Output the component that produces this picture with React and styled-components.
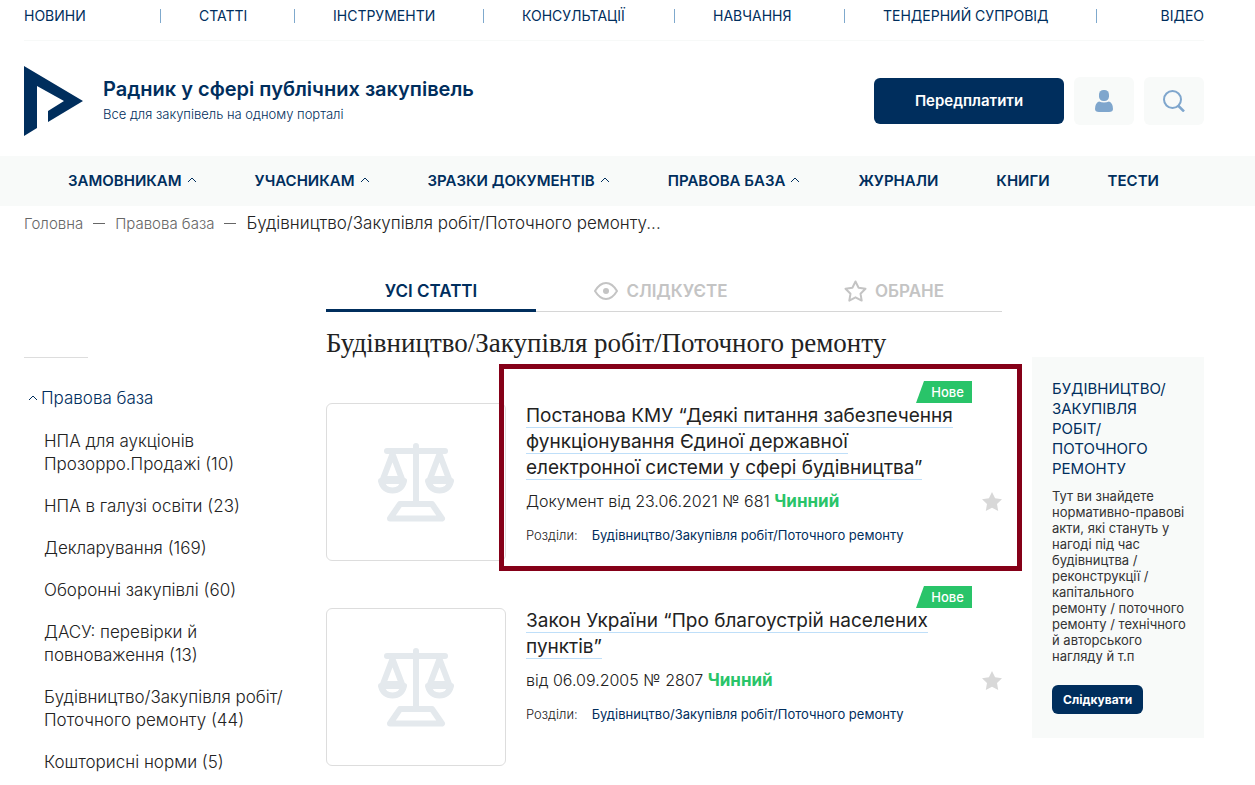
import React, { useState } from "react";
import styled, { createGlobalStyle, css } from "styled-components";

const GlobalStyle = createGlobalStyle`
  *, *::before, *::after {
    box-sizing: border-box;
  }

  body {
    margin: 0;
    background: #fff;
    color: #222;
    font-family: Inter, "Open Sans", sans-serif;
    font-size: 16px;
  }

  h1, h2, p, ul {
    margin: 0;
    padding: 0;
  }

  ul {
    list-style: none;
  }

  a {
    color: inherit;
    text-decoration: none;
  }

  button {
    border: 0;
    padding: 0;
    background: none;
    color: inherit;
    font-family: inherit;
    cursor: pointer;
  }
`;

const Wrap = styled.div`
  padding: 0 51px 0 24px;
`;

const TopNav = styled.nav`
  display: grid;
  grid-template-columns: 137fr 134fr 189fr 191fr 170fr 252fr 107fr;
  height: 41px;
  padding-top: 9px;
  border-bottom: 1px solid #f7f9f8;
`;

const TopLink = styled.a`
  height: 14px;
  padding-left: 38px;
  border-right: 1px solid #7fa9cd;
  color: #002e5d;
  font-size: 14px;
  line-height: 14px;
  white-space: nowrap;

  &:first-child {
    padding-left: 0;
  }

  &:last-child {
    border-right: 0;
    text-align: right;
  }
`;

const Header = styled.header`
  display: flex;
  align-items: center;
  height: 115px;
  padding-top: 5px;
`;

const Brand = styled.a`
  display: flex;
  align-items: center;
  gap: 20px;
  margin-right: auto;
  color: #002e5d;
`;

const BrandName = styled.strong`
  display: block;
  font-size: 20px;
  font-weight: 600;
  line-height: 26px;
`;

const BrandNote = styled.span`
  display: block;
  font-size: 13px;
  font-weight: 300;
  line-height: 24px;
`;

const HeaderActions = styled.div`
  display: flex;
  align-items: center;
  gap: 10px;
`;

const SubscribeButton = styled.button`
  width: 190px;
  height: 46px;
  padding-bottom: 2px;
  border-radius: 6px;
  background: #002e5d;
  color: #fff;
  font-size: 15px;
  font-weight: 600;
`;

const IconButton = styled.button`
  display: grid;
  place-items: center;
  width: 60px;
  height: 48px;
  border-radius: 6px;
  background: #f8faf9;
`;

const MainNav = styled.nav`
  display: flex;
  align-items: center;
  justify-content: space-between;
  height: 50px;
  padding: 0 96px 2px 68px;
  background: #f8faf9;
`;

const MainLink = styled.a`
  display: flex;
  align-items: center;
  gap: 5px;
  color: #002e5d;
  font-size: 15px;
  font-weight: 600;
  white-space: nowrap;
`;

const Breadcrumbs = styled.nav`
  display: flex;
  align-items: center;
  gap: 10px;
  height: 34px;
  color: #666;
  font-size: 15px;
  font-weight: 300;
`;

const Dash = styled.span`
  width: 12px;
  height: 1px;
  background: #666;
`;

const Current = styled.span`
  color: #222;
  font-size: 17px;
`;

const Layout = styled.div`
  display: grid;
  grid-template-columns: 272px minmax(0, 1fr) 172px;
  align-items: start;
  gap: 30px;
  padding-top: 29px;
`;

const Sidebar = styled.aside`
  margin-top: 88px;

  &::before {
    content: "";
    display: block;
    width: 64px;
    height: 1px;
    background: #ddd;
  }
`;

const SidebarTitle = styled.button`
  display: flex;
  align-items: center;
  gap: 3px;
  margin: 28px 0 20px 4px;
  color: #002e5d;
  font-size: 17px;
  font-weight: 300;
  line-height: 24px;
`;

const SidebarList = styled.ul`
  display: grid;
  gap: 19px;
  padding-left: 20px;
  font-size: 17px;
  font-weight: 300;
  line-height: 23px;
  white-space: pre-line;
`;

const Tabs = styled.div`
  display: grid;
  grid-template-columns: 210fr 250fr 216fr;
  height: 43px;
  border-bottom: 1px solid #d6d6d6;
`;

const Tab = styled.button`
  display: flex;
  align-items: center;
  justify-content: center;
  gap: 8px;
  height: 43px;
  border-top: 3px solid transparent;
  border-bottom: 3px solid transparent;
  color: #c4c4c4;
  font-size: 17px;
  font-weight: 600;

  ${({ $active }) =>
    $active &&
    css`
      border-bottom-color: #002e5d;
      color: #002e5d;
    `}
`;

const Heading = styled.h1`
  margin: 15px 0 44px;
  font-family: "Liberation Serif", serif;
  font-size: 27px;
  font-weight: 400;
  line-height: 32px;
`;

const Cards = styled.div`
  display: grid;
  gap: 47px;
`;

const Card = styled.article`
  position: relative;
  display: grid;
  grid-template-columns: 180px minmax(0, 1fr);
  gap: 20px;

  ${({ $marked }) =>
    $marked &&
    css`
      &::after {
        content: "";
        position: absolute;
        inset: -39px -20px -10px 173px;
        border: 5px solid #850018;
        pointer-events: none;
      }
    `}
`;

const Thumb = styled.a`
  display: grid;
  place-items: center;
  height: 158px;
  border: 1px solid #ddd;
  border-radius: 6px;
`;

const Badge = styled.span`
  position: absolute;
  top: -22px;
  right: 30px;
  width: 56px;
  padding-left: 7px;
  background: #29c469;
  clip-path: polygon(8px 0, 100% 0, 100% 100%, 0 100%);
  color: #fff;
  font-size: 13px;
  font-weight: 500;
  line-height: 22px;
  text-align: center;
`;

const CardTitle = styled.h2`
  font-size: 19px;
  font-weight: 400;
  line-height: 26px;
  white-space: pre-line;

  a {
    border-bottom: 1px solid #bfdff9;
  }
`;

const Meta = styled.div`
  display: flex;
  align-items: center;
  justify-content: space-between;
  margin-top: 8px;
  font-weight: 300;
  line-height: 24px;
`;

const Status = styled.strong`
  color: #29c469;
  font-size: 17px;
  font-weight: 700;
`;

const StarButton = styled.button`
  display: flex;
`;

const Sections = styled.div`
  display: flex;
  gap: 14px;
  margin-top: 12px;
  font-size: 13px;
  font-weight: 300;
  line-height: 20px;

  a {
    color: #002e5d;
    font-weight: 400;
  }
`;

const Info = styled.aside`
  margin-top: 88px;
  padding: 22px 12px 24px 20px;
  background: #f8faf9;
  white-space: pre-line;
`;

const InfoTitle = styled.h2`
  color: #002e5d;
  font-size: 15px;
  font-weight: 400;
  line-height: 20px;
`;

const InfoText = styled.p`
  margin-top: 9px;
  color: #333;
  font-size: 13px;
  line-height: 16px;
`;

const FollowButton = styled.button`
  height: 29px;
  margin-top: 21px;
  padding: 0 11px;
  border-radius: 6px;
  background: #002e5d;
  color: #fff;
  font-size: 12px;
  font-weight: 700;
`;

const topLinks = [
  "НОВИНИ",
  "СТАТТІ",
  "ІНСТРУМЕНТИ",
  "КОНСУЛЬТАЦІЇ",
  "НАВЧАННЯ",
  "ТЕНДЕРНИЙ СУПРОВІД",
  "ВІДЕО",
];

const mainLinks = [
  { title: "ЗАМОВНИКАМ", menu: true },
  { title: "УЧАСНИКАМ", menu: true },
  { title: "ЗРАЗКИ ДОКУМЕНТІВ", menu: true },
  { title: "ПРАВОВА БАЗА", menu: true },
  { title: "ЖУРНАЛИ" },
  { title: "КНИГИ" },
  { title: "ТЕСТИ" },
];

const categories = [
  "НПА для аукціонів\nПрозорро.Продажі (10)",
  "НПА в галузі освіти (23)",
  "Декларування (169)",
  "Оборонні закупівлі (60)",
  "ДАСУ: перевірки й\nповноваження (13)",
  "Будівництво/Закупівля робіт/\nПоточного ремонту (44)",
  "Кошторисні норми (5)",
];

const articles = [
  {
    title:
      "Постанова КМУ “Деякі питання забезпечення\nфункціонування Єдиної державної\nелектронної системи у сфері будівництва”",
    meta: "Документ від 23.06.2021 № 681",
    marked: true,
  },
  {
    title: "Закон України “Про благоустрій населених\nпунктів”",
    meta: "від 06.09.2005 № 2807",
  },
];

const Logo = () => (
  <svg width="59" height="70" viewBox="0 0 59 70" fill="#002e5d">
    <path d="M0 0L59 35L24 56V45L40 35L13 20V62L0 70Z" />
  </svg>
);

const Chevron = () => (
  <svg width="10" height="6" viewBox="0 0 10 6" fill="none" stroke="#002e5d">
    <path d="M1 5L5 1L9 5" />
  </svg>
);

const UserIcon = () => (
  <svg width="20" height="22" viewBox="0 0 20 22" fill="#7fa6cd">
    <rect x="5" y="0" width="10" height="11" rx="4.5" />
    <path d="M5 11.500Q10 13.500 15 11.500Q19 13 19 19Q19 22 15 22H5Q1 22 1 19Q1 13 5 11.500Z" />
  </svg>
);

const SearchIcon = () => (
  <svg width="22" height="22" viewBox="0 0 22 22" fill="none" stroke="#7fa6cd" strokeWidth="2">
    <circle cx="9.5" cy="9.5" r="8.5" />
    <path d="M15 15.5L21 21.5" strokeWidth="2.5" />
  </svg>
);

const EyeIcon = () => (
  <svg width="24" height="18" viewBox="0 0 24 18" fill="none" stroke="currentColor" strokeWidth="2">
    <path d="M1 9C4 4 7.500 1 12 1S20 4 23 9C20 14 16.500 17 12 17S4 14 1 9Z" strokeLinejoin="round" />
    <circle cx="12" cy="9" r="3" fill="currentColor" stroke="none" />
  </svg>
);

const StarOutline = () => (
  <svg width="23" height="22" viewBox="0 0 23 22" fill="none" stroke="currentColor" strokeWidth="2">
    <path
      d="M11.500 1.500L14.600 7.800L21.500 8.800L16.500 13.700L17.700 20.600L11.500 17.300L5.300 20.600L6.500 13.700L1.500 8.800L8.400 7.800Z"
      strokeLinejoin="round"
    />
  </svg>
);

const StarSolid = () => (
  <svg width="20" height="19" viewBox="0 0 20 19" fill="#d8d8d8">
    <path d="M10 0L13.100 6.300L20 7.300L15 12.100L16.200 19L10 15.700L3.800 19L5 12.100L0 7.300L6.900 6.300Z" />
  </svg>
);

const ScalesIcon = () => (
  <svg
    width="76"
    height="80"
    viewBox="0 0 76 80"
    fill="none"
    stroke="#e4e9ed"
    strokeWidth="6"
    strokeLinecap="round"
    strokeLinejoin="round"
  >
    <path d="M38 4V60" />
    <path d="M9 9H67" />
    <path d="M14.500 12L5 37H24L14.500 12Z" />
    <path d="M61.500 12L52 37H71L61.500 12Z" />
    <path d="M3 39Q5.500 48.500 14.500 48.500T26 39Z" />
    <path d="M50 39Q52.500 48.500 61.500 48.500T73 39Z" />
    <path d="M22 62H54L64 76.500H12Z" />
  </svg>
);

const Article = ({ article }) => {
  const [saved, setSaved] = useState(false);

  return (
    <Card $marked={article.marked}>
      <Thumb href="#" aria-label={article.title}>
        <ScalesIcon />
      </Thumb>
      <div>
        <Badge>Нове</Badge>
        <CardTitle>
          <a href="#">{article.title}</a>
        </CardTitle>
        <Meta>
          <span>
            {article.meta} <Status>Чинний</Status>
          </span>
          <StarButton
            aria-label="Додати в обране"
            aria-pressed={saved}
            onClick={() => setSaved(!saved)}
          >
            <StarSolid />
          </StarButton>
        </Meta>
        <Sections>
          <span>Розділи:</span>
          <a href="#">Будівництво/Закупівля робіт/Поточного ремонту</a>
        </Sections>
      </div>
    </Card>
  );
};

export default function App() {
  const [tab, setTab] = useState("all");

  return (
    <>
      <GlobalStyle />
      <Wrap>
        <TopNav>
          {topLinks.map((link) => (
            <TopLink href="#" key={link}>
              {link}
            </TopLink>
          ))}
        </TopNav>
        <Header>
          <Brand href="#">
            <Logo />
            <span>
              <BrandName>Радник у сфері публічних закупівель</BrandName>
              <BrandNote>Все для закупівель на одному порталі</BrandNote>
            </span>
          </Brand>
          <HeaderActions>
            <SubscribeButton>Передплатити</SubscribeButton>
            <IconButton aria-label="Профіль">
              <UserIcon />
            </IconButton>
            <IconButton aria-label="Пошук">
              <SearchIcon />
            </IconButton>
          </HeaderActions>
        </Header>
      </Wrap>

      <MainNav>
        {mainLinks.map((link) => (
          <MainLink href="#" key={link.title}>
            {link.title}
            {link.menu && <Chevron />}
          </MainLink>
        ))}
      </MainNav>

      <Wrap>
        <Breadcrumbs>
          <a href="#">Головна</a>
          <Dash />
          <a href="#">Правова база</a>
          <Dash />
          <Current>Будівництво/Закупівля робіт/Поточного ремонту...</Current>
        </Breadcrumbs>

        <Layout>
          <Sidebar>
            <SidebarTitle>
              <Chevron />
              Правова база
            </SidebarTitle>
            <SidebarList>
              {categories.map((category) => (
                <li key={category}>
                  <a href="#">{category}</a>
                </li>
              ))}
            </SidebarList>
          </Sidebar>

          <main>
            <Tabs>
              <Tab $active={tab === "all"} onClick={() => setTab("all")}>
                УСІ СТАТТІ
              </Tab>
              <Tab $active={tab === "watch"} onClick={() => setTab("watch")}>
                <EyeIcon />
                СЛІДКУЄТЕ
              </Tab>
              <Tab $active={tab === "saved"} onClick={() => setTab("saved")}>
                <StarOutline />
                ОБРАНЕ
              </Tab>
            </Tabs>
            <Heading>Будівництво/Закупівля робіт/Поточного ремонту</Heading>
            <Cards>
              {articles.map((article) => (
                <Article key={article.meta} article={article} />
              ))}
            </Cards>
          </main>

          <Info>
            <InfoTitle>{"БУДІВНИЦТВО/\nЗАКУПІВЛЯ\nРОБІТ/\nПОТОЧНОГО\nРЕМОНТУ"}</InfoTitle>
            <InfoText>
              {
                "Тут ви знайдете\nнормативно-правові\nакти, які стануть у\nнагоді під час\nбудівництва /\nреконструкції /\nкапітального\nремонту / поточного\nремонту / технічного\nй авторського\nнагляду й т.п"
              }
            </InfoText>
            <FollowButton>Слідкувати</FollowButton>
          </Info>
        </Layout>
      </Wrap>
    </>
  );
}
